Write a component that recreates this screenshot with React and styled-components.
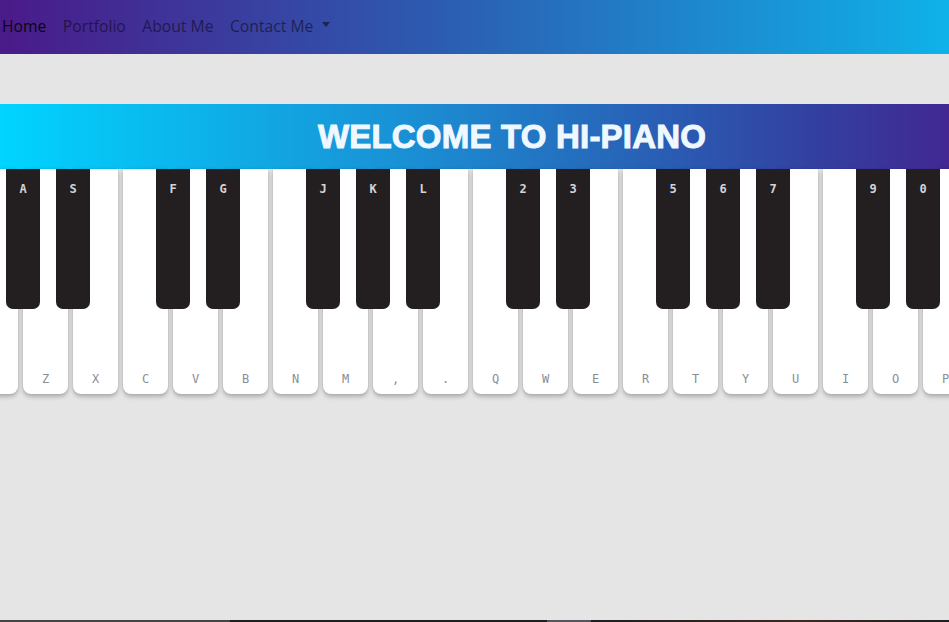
import React from 'react';
import styled, { createGlobalStyle } from 'styled-components';

const GlobalStyle = createGlobalStyle`
  html, body {
    margin: 0;
    padding: 0;
    background: #e5e5e5;
    overflow: hidden;
    font-family: 'Open Sans', 'Noto Sans', sans-serif;
  }
`;

const Page = styled.div`
  height: 622px;
  display: flex;
  flex-direction: column;
`;

const Navbar = styled.nav`
  height: 54px;
  display: flex;
  align-items: center;
  padding: 0 0 3px 2px;
  box-sizing: border-box;
  background: linear-gradient(90deg, #4a1a89 0%, #2d5ab0 45%, #0fb2e9 100%);
`;

const NavList = styled.div`
  display: flex;
  align-items: center;
  gap: 16.5px;
`;

const NavLink = styled.a`
  font-size: 15.7px;
  line-height: 24px;
  color: ${props => (props.active ? 'rgba(0, 0, 0, 0.9)' : 'rgba(0, 0, 0, 0.5)')};
  text-decoration: none;
  display: flex;
  align-items: center;

  &.dropdown::after {
    content: '';
    display: inline-block;
    margin-left: 9px;
    border-top: 5px solid rgba(0, 0, 0, 0.5);
    border-left: 4.5px solid transparent;
    border-right: 4.5px solid transparent;
    transform: translateY(-1px);
  }
`;

const Main = styled.main`
  flex: 1;
  padding-top: 50px;
`;

const Stage = styled.div`
  width: 1024px;
`;

const Banner = styled.div`
  height: 65px;
  display: flex;
  align-items: center;
  justify-content: center;
  background: linear-gradient(90deg, #00d4ff 0%, #1a8fd4 40%, #333fa0 80%, #4a1a89 100%);
`;

const Title = styled.h1`
  margin: 0;
  font-family: 'Liberation Sans', Arial, sans-serif;
  font-weight: 900;
  font-size: 33px;
  letter-spacing: 0.2px;
  color: #f0f8ff;
  -webkit-text-stroke: 1px #f0f8ff;
`;

const Keyboard = styled.div`
  display: flex;
  gap: 5px;
  margin-left: -27px;
  height: 225px;
`;

const WhiteKey = styled.div`
  position: relative;
  flex: 0 0 45px;
  height: 225px;
  background: #fff;
  border-radius: 0 0 8px 8px;
  box-shadow: 0 3px 4px rgba(0, 0, 0, 0.22), 0 0 3px rgba(0, 0, 0, 0.12);
  display: flex;
  flex-direction: column;
  justify-content: flex-end;
  align-items: center;
  padding-bottom: 8px;
  box-sizing: border-box;
`;

const KeyLabel = styled.span`
  font-family: 'DejaVu Sans Mono', 'Liberation Mono', monospace;
  font-size: 12px;
  color: ${props => (props.dark ? '#d4d4d8' : '#8c8c96')};
  font-weight: ${props => (props.dark ? 700 : 400)};
`;

const BlackKey = styled.div`
  position: absolute;
  top: 0;
  left: 33px;
  width: 34px;
  height: 140px;
  background: #231f20;
  border-radius: 0 0 7px 7px;
  z-index: 2;
  display: flex;
  justify-content: center;
  padding-top: 13px;
  box-sizing: border-box;
`;

const Footer = styled.footer`
  height: 2px;
  background: linear-gradient(
    90deg,
    #444 0,
    #444 230px,
    #1e1e20 230px,
    #1e1e20 547px,
    #55555a 547px,
    #55555a 591px,
    #1e1e22 591px,
    #3a2a22 800px,
    #1e1e22 949px
  );
`;

const keys = [
  ['', 'A'],
  ['Z', 'S'],
  ['X', null],
  ['C', 'F'],
  ['V', 'G'],
  ['B', null],
  ['N', 'J'],
  ['M', 'K'],
  [',', 'L'],
  ['.', null],
  ['Q', '2'],
  ['W', '3'],
  ['E', null],
  ['R', '5'],
  ['T', '6'],
  ['Y', '7'],
  ['U', null],
  ['I', '9'],
  ['O', '0'],
  ['P', '-'],
  ['[', null],
];

const App = () => {
  return (
    <Page>
      <GlobalStyle />
      <Navbar>
        <NavList>
          <NavLink href="#" active>
            Home
          </NavLink>
          <NavLink href="#">Portfolio</NavLink>
          <NavLink href="#">About Me</NavLink>
          <NavLink href="#" className="dropdown">
            Contact Me
          </NavLink>
        </NavList>
      </Navbar>
      <Main>
        <Stage>
          <Banner>
            <Title>WELCOME TO HI-PIANO</Title>
          </Banner>
          <Keyboard>
            {keys.map(([white, black], i) => (
              <WhiteKey key={i}>
                {black && (
                  <BlackKey>
                    <KeyLabel dark>{black}</KeyLabel>
                  </BlackKey>
                )}
                <KeyLabel>{white}</KeyLabel>
              </WhiteKey>
            ))}
          </Keyboard>
        </Stage>
      </Main>
      <Footer />
    </Page>
  );
};

export default App;
